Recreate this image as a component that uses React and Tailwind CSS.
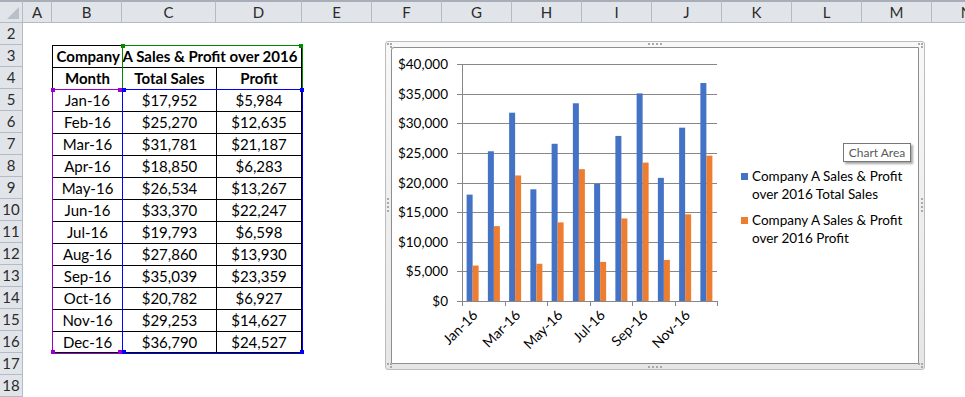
import React from "react";

const data = [
  ["Jan-16", 17952, 5984],
  ["Feb-16", 25270, 12635],
  ["Mar-16", 31781, 21187],
  ["Apr-16", 18850, 6283],
  ["May-16", 26534, 13267],
  ["Jun-16", 33370, 22247],
  ["Jul-16", 19793, 6598],
  ["Aug-16", 27860, 13930],
  ["Sep-16", 35039, 23359],
  ["Oct-16", 20782, 6927],
  ["Nov-16", 29253, 14627],
  ["Dec-16", 36790, 24527],
];

const fmt = (n) => "$" + n.toLocaleString("en-US");
const letters = ["A", "B", "C", "D", "E", "F", "G", "H", "I", "J", "K", "L", "M", "N"];

const hdr =
  "bg-[#e1e5ea] border-r border-b border-[#b3bbc5] flex items-center justify-center text-[15px] text-[#2b2b2b]";
const cell = "flex items-center justify-center text-[15px] text-black border-t border-l border-black";

function RowHead({ n }) {
  return <div className={hdr}>{n}</div>;
}

function Chart() {
  const x0 = 70,
    x1 = 325,
    yT = 16,
    yB = 253;
  const H = yB - yT;
  const w = (x1 - x0) / 12;
  const gy = (k) => Math.round(yB - (k * H) / 8) + 0.5;
  const ticks = [0, 1, 2, 3, 4, 5, 6];
  return (
    <svg width="345" height="315" className="shrink-0">
      {[0, 1, 2, 3, 4, 5, 6, 7, 8].map((k) => (
        <g key={k}>
          <line x1={x0 - 5} x2={x1} y1={gy(k)} y2={gy(k)} stroke="#878787" strokeWidth="1" />
          <text
            x={56}
            y={gy(k) + 4.5}
            textAnchor="end"
            fontFamily="Lato, 'Liberation Sans', sans-serif"
            fontSize="13.5"
            fill="#000"
          >
            {fmt(k * 5000)}
          </text>
        </g>
      ))}
      <line x1={x0 + 0.5} x2={x0 + 0.5} y1={gy(8)} y2={yB + 5} stroke="#878787" />
      {ticks.map((k) => (
        <line
          key={k}
          x1={Math.round(x0 + k * 2 * w) + 0.5}
          x2={Math.round(x0 + k * 2 * w) + 0.5}
          y1={yB}
          y2={yB + 5}
          stroke="#878787"
        />
      ))}
      {data.map(([m, s, p], i) => {
        const c = x0 + (i + 0.5) * w;
        const hs = (s / 40000) * H;
        const hp = (p / 40000) * H;
        return (
          <g key={m}>
            <rect x={c - 6} y={yB - hs} width="6" height={hs} fill="#4472c4" />
            <rect x={c} y={yB - hp} width="6" height={hp} fill="#ed7d31" />
          </g>
        );
      })}
      {data.map(([m], i) => {
        if (i % 2) return null;
        const c = x0 + (i + 0.5) * w + 6;
        const y = yB + 15;
        return (
          <text
            key={m}
            x={c}
            y={y}
            textAnchor="end"
            transform={`rotate(-45 ${c} ${y})`}
            fontFamily="Lato, 'Liberation Sans', sans-serif"
            fontSize="14"
            fill="#000"
          >
            {m}
          </text>
        );
      })}
    </svg>
  );
}

function Dots({ className, vertical }) {
  return (
    <div className={`absolute flex ${vertical ? "flex-col" : "flex-row"} gap-[2px] ${className}`}>
      {[0, 1, 2, 3].map((i) => (
        <span key={i} className="block w-[2px] h-[2px] bg-[#a9a9a9]" />
      ))}
    </div>
  );
}

function CornerDots({ className }) {
  return (
    <div className={`absolute flex flex-col gap-[1px] ${className}`}>
      <div className="flex gap-[1px]">
        <span className="block w-[2px] h-[2px] bg-[#a9a9a9]" />
        <span className="block w-[2px] h-[2px] bg-[#a9a9a9]" />
      </div>
      <div className="flex gap-[1px] justify-end">
        <span className="block w-[2px] h-[2px] bg-[#a9a9a9]" />
      </div>
    </div>
  );
}

function LegendItem({ color, l1, l2 }) {
  return (
    <div className="flex items-start gap-[4px]">
      <span className={`block w-[7px] h-[7px] mt-[6px] ${color}`} />
      <div className="text-[13.5px] leading-[18px] text-black">
        <div>{l1}</div>
        <div>{l2}</div>
      </div>
    </div>
  );
}

export default function App() {
  return (
    <div className="relative w-[965px] h-[397px] overflow-hidden bg-white font-['Lato','Liberation_Sans',sans-serif]">
      <div className="grid grid-cols-[23px_29px_70px_94px_86px_repeat(10,70px)] grid-rows-[23px_repeat(17,22px)]">
        {/* header row */}
        <div className={`${hdr} border-t-2 border-t-[#a7aeb7] relative`}>
          <svg width="22" height="20" className="absolute left-0 top-0">
            <polygon points="19,5 19,17 7,17" fill="#b9c0c8" />
          </svg>
        </div>
        {letters.map((l) => (
          <div key={l} className={`${hdr} border-t-2 border-t-[#a7aeb7]`}>
            {l}
          </div>
        ))}

        {/* row 2 */}
        <RowHead n={2} />
        <div className="col-span-14" />

        {/* row 3 */}
        <RowHead n={3} />
        <div />
        <div className={`${cell} col-span-3 border-r font-bold`}>Company A Sales &amp; Profit over 2016</div>
        <div className="col-span-10" />

        {/* row 4 */}
        <RowHead n={4} />
        <div />
        <div className={`${cell} font-bold`}>Month</div>
        <div className={`${cell} font-bold`}>Total Sales</div>
        <div className={`${cell} font-bold border-r`}>Profit</div>
        <div className="col-span-10" />

        {data.map(([m, s, p], i) => (
          <React.Fragment key={m}>
            <RowHead n={i + 5} />
            <div />
            <div className={`${cell} ${i === 11 ? "border-b" : ""}`}>{m}</div>
            <div className={`${cell} ${i === 11 ? "border-b" : ""}`}>{fmt(s)}</div>
            <div className={`${cell} border-r ${i === 11 ? "border-b" : ""}`}>{fmt(p)}</div>
            <div className="col-span-10" />
          </React.Fragment>
        ))}

        <RowHead n={17} />
        <div className="col-span-14" />
        <RowHead n={18} />
        <div className="col-span-14" />
      </div>

      {/* selection range overlays */}
      <div className="absolute left-[122px] top-[45px] w-[181px] h-[45px] border border-[#008a00]" />
      <div className="absolute left-[52px] top-[89px] w-[71px] h-[265px] border border-[#9b00d3]" />
      <div className="absolute left-[122px] top-[89px] w-[181px] h-[265px] border border-[#0000ff]" />
      <span className="absolute left-[121px] top-[44px] w-[4px] h-[4px] bg-[#008a00]" />
      <span className="absolute left-[299px] top-[44px] w-[4px] h-[4px] bg-[#008a00]" />
      <span className="absolute left-[51px] top-[88px] w-[4px] h-[4px] bg-[#9b00d3]" />
      <span className="absolute left-[118px] top-[88px] w-[4px] h-[4px] bg-[#9b00d3]" />
      <span className="absolute left-[122px] top-[88px] w-[4px] h-[4px] bg-[#0000ff]" />
      <span className="absolute left-[300px] top-[88px] w-[4px] h-[4px] bg-[#0000ff]" />
      <span className="absolute left-[51px] top-[350px] w-[4px] h-[4px] bg-[#9b00d3]" />
      <span className="absolute left-[118px] top-[350px] w-[4px] h-[4px] bg-[#9b00d3]" />
      <span className="absolute left-[122px] top-[350px] w-[4px] h-[4px] bg-[#0000ff]" />
      <span className="absolute left-[300px] top-[350px] w-[4px] h-[4px] bg-[#0000ff]" />

      {/* chart object */}
      <div className="absolute left-[385px] top-[41px] w-[540px] h-[329px] rounded-[3px] border border-[#bcbcbc] bg-gradient-to-b from-[#f8f8f8] to-[#e6e6e6] p-[5px]">
        <div className="w-full h-full border border-[#8e8e8e] bg-white flex items-center rounded-tl-[3px]">
          <div className="self-start">
            <Chart />
          </div>
          <div className="ml-[4px] flex flex-col gap-[8px] mt-[2px]">
            <LegendItem color="bg-[#4472c4]" l1="Company A Sales & Profit" l2="over 2016 Total Sales" />
            <LegendItem color="bg-[#ed7d31]" l1="Company A Sales & Profit" l2="over 2016 Profit" />
          </div>
        </div>
        <Dots className="left-[262px] top-[1px]" />
        <Dots className="left-[262px] bottom-[1px]" />
        <Dots vertical className="left-[1px] top-[156px]" />
        <Dots vertical className="right-[1px] top-[156px]" />
        <CornerDots className="left-[1px] top-[1px]" />
        <CornerDots className="right-[1px] top-[1px]" />
        <CornerDots className="left-[1px] bottom-[1px]" />
        <CornerDots className="right-[1px] bottom-[1px]" />
        <div className="absolute left-[457px] top-[101px] w-[68px] h-[19px] border border-[#777] bg-white shadow-[2px_2px_2px_rgba(0,0,0,0.35)] flex items-center justify-center text-[12px] text-[#595959]">
          Chart Area
        </div>
      </div>
    </div>
  );
}
